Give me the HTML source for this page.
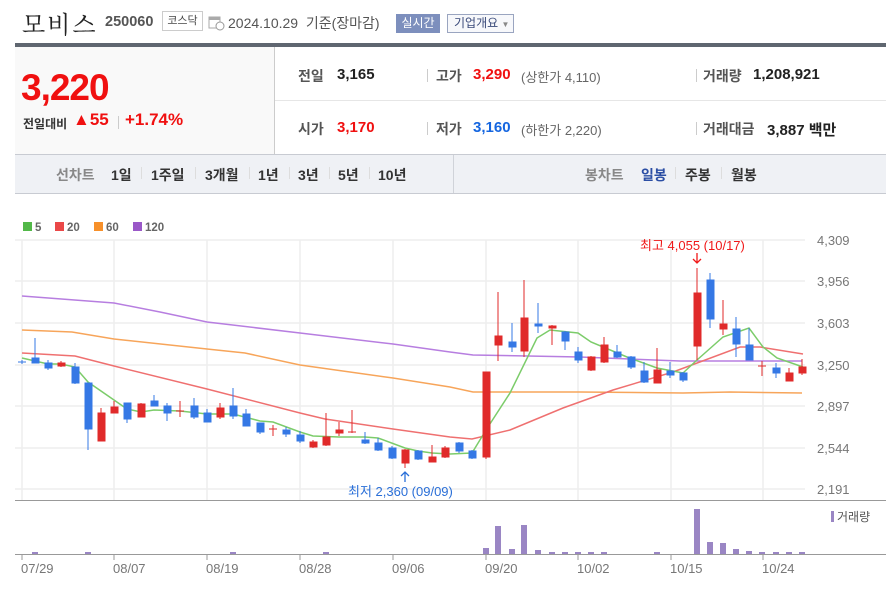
<!DOCTYPE html>
<html><head><meta charset="utf-8"><style>
*{margin:0;padding:0;box-sizing:border-box}
body{width:886px;height:597px;background:#fff;position:relative;overflow:hidden;font-family:"Liberation Sans","Noto Sans CJK KR",sans-serif;color:#333}
.a{position:absolute;white-space:nowrap}
.b{font-weight:bold}
.r{color:#f01010}.bl{color:#1566e0}
.sep{position:absolute;width:1px;height:13px;background:#ccc}
.tab{position:absolute;top:165px;font-size:14px;font-weight:bold;color:#333}
.ts{position:absolute;top:167px;width:1px;height:12px;background:#ddd}
</style></head><body>
<div class="a" style="left:22px;top:5px;font-size:24px;font-family:'Noto Serif CJK SC',serif;color:#222;letter-spacing:2px">모비스</div>
<div class="a b" style="left:105px;top:14px;font-size:14.5px;color:#555">250060</div>
<div class="a" style="left:162px;top:11px;width:41px;height:20px;border:1px solid #ccc;font-size:11px;line-height:18px;text-align:center;color:#444">코스닥</div>
<svg class="a" style="left:208px;top:14px" width="17" height="17"><rect x="1" y="3" width="11" height="11" fill="none" stroke="#aaa"/><rect x="1" y="3" width="11" height="3" fill="#aaa"/><circle cx="12" cy="12" r="4" fill="#fff" stroke="#999"/></svg>
<div class="a" style="left:228px;top:13px;font-size:14px;color:#555">2024.10.29 &nbsp;기준(장마감)</div>
<div class="a" style="left:396px;top:14px;width:44px;height:19px;background:#7d8fbd;color:#fff;font-size:12px;line-height:19px;text-align:center">실시간</div>
<div class="a" style="left:447px;top:14px;width:67px;height:19px;border:1px solid #9aa5c0;color:#3a4a7a;font-size:12px;line-height:17px;padding-left:6px;background:#f7f8fb">기업개요 <span style="font-size:8px;color:#888">▼</span></div>
<div class="a" style="left:15px;top:43px;width:871px;height:4px;background:#5f6670"></div>
<div class="a" style="left:15px;top:47px;width:260px;height:107px;background:#f9f9f9;border-right:1px solid #ccc"></div>
<div class="a b r" style="left:21px;top:67px;font-size:37px;letter-spacing:-1px">3,220</div>
<div class="a" style="left:23px;top:115px;font-size:12px;color:#333;font-weight:bold">전일대비</div>
<div class="a b r" style="left:73px;top:110px;font-size:17px">▲55</div>
<div class="sep" style="left:118px;top:116px"></div>
<div class="a b r" style="left:125px;top:110px;font-size:17px">+1.74%</div>
<div class="a" style="left:275px;top:100px;width:611px;height:1px;background:#e6e6e6"></div>
<div class="a b" style="left:298px;top:66px;font-size:14px;color:#555">전일</div><div class="a b" style="left:337px;top:66px;font-size:15px;color:#222">3,165</div>
<div class="sep" style="left:427px;top:69px"></div>
<div class="a b" style="left:436px;top:66px;font-size:14px;color:#555">고가</div><div class="a b r" style="left:473px;top:66px;font-size:15px">3,290</div><div class="a" style="left:521px;top:67px;font-size:13px;color:#666">(상한가 4,110)</div>
<div class="sep" style="left:696px;top:69px"></div>
<div class="a b" style="left:703px;top:66px;font-size:14px;color:#555">거래량</div><div class="a b" style="left:753px;top:66px;font-size:15px;color:#222">1,208,921</div>
<div class="a b" style="left:298px;top:119px;font-size:14px;color:#555">시가</div><div class="a b r" style="left:337px;top:119px;font-size:15px">3,170</div>
<div class="sep" style="left:427px;top:122px"></div>
<div class="a b" style="left:436px;top:119px;font-size:14px;color:#555">저가</div><div class="a b bl" style="left:473px;top:119px;font-size:15px">3,160</div><div class="a" style="left:521px;top:120px;font-size:13px;color:#666">(하한가 2,220)</div>
<div class="sep" style="left:696px;top:122px"></div>
<div class="a b" style="left:703px;top:119px;font-size:14px;color:#555">거래대금</div><div class="a b" style="left:767px;top:119px;font-size:15px;color:#222">3,887 백만</div>
<div class="a" style="left:15px;top:154px;width:871px;height:40px;background:#eff1f5;border-top:1px solid #c8cbd2;border-bottom:1px solid #c8cbd2"></div>
<div class="a" style="left:453px;top:155px;width:1px;height:38px;background:#d0d3d9"></div>
<div class="tab" style="left:56px;color:#888">선차트</div>
<div class="tab" style="left:111px">1일</div><div class="ts" style="left:141px"></div>
<div class="tab" style="left:151px">1주일</div><div class="ts" style="left:195px"></div>
<div class="tab" style="left:205px">3개월</div><div class="ts" style="left:249px"></div>
<div class="tab" style="left:258px">1년</div><div class="ts" style="left:289px"></div>
<div class="tab" style="left:298px">3년</div><div class="ts" style="left:329px"></div>
<div class="tab" style="left:338px">5년</div><div class="ts" style="left:369px"></div>
<div class="tab" style="left:378px">10년</div>
<div class="tab" style="left:585px;color:#888">봉차트</div>
<div class="tab" style="left:641px;color:#2b4ea4">일봉</div><div class="ts" style="left:675px"></div>
<div class="tab" style="left:685px">주봉</div><div class="ts" style="left:721px"></div>
<div class="tab" style="left:731px">월봉</div>

<svg class="a" style="left:0;top:0" width="886" height="597" font-family="Liberation Sans,Noto Sans CJK KR,sans-serif">
<g font-size="11.5" font-weight="bold" fill="#666">
<rect x="23" y="222" width="9" height="9" fill="#52b848"/><text x="35" y="231">5</text>
<rect x="55" y="222" width="9" height="9" fill="#ea4848"/><text x="67" y="231">20</text>
<rect x="94" y="222" width="9" height="9" fill="#f7902a"/><text x="106" y="231">60</text>
<rect x="133" y="222" width="9" height="9" fill="#9a58c8"/><text x="145" y="231">120</text>
</g>
<g stroke="#eeeeee" stroke-width="1.5">
<path d="M15 240H805M15 281H805M15 323H805M15 365H805M15 406H805M15 448H805M15 489H805"/>
<path d="M22 240V500M114 240V500M207 240V500M300 240V500M393 240V500M486 240V500M578 240V500M671 240V500M763 240V500"/>
</g>
<path d="M15 500.5H886M15 554.5H886" stroke="#999" stroke-width="1"/>
<path d="M22 554V560M114 554V560M207 554V560M300 554V560M393 554V560M486 554V560M578 554V560M671 554V560M763 554V560" stroke="#999"/>
<g font-size="13" fill="#777">
<text x="817" y="245">4,309</text><text x="817" y="286">3,956</text><text x="817" y="328">3,603</text><text x="817" y="370">3,250</text><text x="817" y="411">2,897</text><text x="817" y="453">2,544</text><text x="817" y="494">2,191</text>
<text x="21" y="573">07/29</text><text x="113" y="573">08/07</text><text x="206" y="573">08/19</text><text x="299" y="573">08/28</text><text x="392" y="573">09/06</text><text x="485" y="573">09/20</text><text x="577" y="573">10/02</text><text x="670" y="573">10/15</text><text x="762" y="573">10/24</text>
</g>
<g fill="none" stroke-width="1.5">
<polyline stroke="#b77ee0" points="22,296 114,303 160,312 207,322 300,333 393,344 450,352 473,355 580,357 680,361 802,361"/>
<polyline stroke="#f7a55a" points="22,330 72,332 114,339 207,349 245,353 300,365 393,378 450,387 473,392 580,392 683,393 730,392 802,393"/>
<polyline stroke="#ef7070" points="22,353 75,356 114,366 207,389 300,413 325,419 393,429 450,437 472,439 510,430 563,408 613,390 673,372 740,347 760,347 803,354"/>
<polyline stroke="#7ccc6a" points="22,358 48,364 61,364 75,367 88,382 114,400 127,409 141,412 154,410 180,411 207,414 233,414 260,421 273,422 300,432 313,436 339,437 365,437 378,438 405,448 418,451 432,453 450,454 472,453 486,430 510,393 537,338 550,330 578,333 591,342 627,357 657,368 683,373 697,360 723,337 749,328 763,347 777,358 803,367"/>
</g>
<g stroke="#3578e5" fill="#3578e5">
<path d="M22 360V364M18 362H26M35 338V363M48 360V370M75 363V384M88 383V450M127 403V423M154 395V406M167 403V421M194 398V419M207 409V422M233 388V419M246 409V426M260 423V434M286 427V437M300 431V443M365 432V444M378 438V451M392 446V459M418 450V460M459 442V453M472 450V459M512 323V352M538 303V333M565 331V350M578 347V363M617 345V358M631 356V369M644 362V383M670 362V378M683 372V382M710 273V328M736 317V357M749 328V360M776 363V378"/>
<rect x="32" y="358" width="7" height="5"/><rect x="45" y="363" width="7" height="5"/><rect x="72" y="367" width="7" height="16"/><rect x="85" y="383" width="7" height="46"/><rect x="124" y="403" width="7" height="16"/><rect x="151" y="401" width="7" height="5"/><rect x="164" y="406" width="7" height="7"/><rect x="191" y="406" width="7" height="11"/><rect x="204" y="413" width="7" height="9"/><rect x="230" y="406" width="7" height="10"/><rect x="243" y="414" width="7" height="12"/><rect x="257" y="423" width="7" height="9"/><rect x="283" y="430" width="7" height="4"/><rect x="297" y="435" width="7" height="6"/><rect x="362" y="440" width="7" height="3"/><rect x="375" y="443" width="7" height="7"/><rect x="389" y="448" width="7" height="10"/><rect x="415" y="451" width="7" height="8"/><rect x="456" y="443" width="7" height="8"/><rect x="469" y="451" width="7" height="7"/><rect x="509" y="342" width="7" height="5"/><rect x="535" y="324" width="7" height="2"/><rect x="562" y="332" width="7" height="9"/><rect x="575" y="352" width="7" height="8"/><rect x="614" y="352" width="7" height="5"/><rect x="628" y="357" width="7" height="10"/><rect x="641" y="371" width="7" height="11"/><rect x="667" y="371" width="7" height="4"/><rect x="680" y="373" width="7" height="7"/><rect x="707" y="280" width="7" height="39"/><rect x="733" y="329" width="7" height="15"/><rect x="746" y="345" width="7" height="15"/><rect x="773" y="368" width="7" height="5"/>
</g>
<g stroke="#e02a2a" fill="#e02a2a">
<path d="M61 361V367M101 408V441M114 401V413M141 403V417M180 401V417M176 411H184M220 403V419M273 425V436M269 429H277M313 440V448M326 413V446M339 422V436M352 410V433M348 432H356M405 449V468M432 445V462M445 446V458M486 372V459M498 292V361M524 280V357M552 325V345M591 356V371M604 337V363M657 348V383M697 268V360M723 300V335M762 361V376M758 366H766M789 368V381M802 359V375"/>
<rect x="58" y="363" width="7" height="3"/><rect x="98" y="413" width="7" height="28"/><rect x="111" y="407" width="7" height="6"/><rect x="138" y="404" width="7" height="13"/><rect x="217" y="408" width="7" height="9"/><rect x="310" y="442" width="7" height="5"/><rect x="323" y="437" width="7" height="8"/><rect x="336" y="430" width="7" height="3"/><rect x="402" y="450" width="7" height="13"/><rect x="429" y="457" width="7" height="5"/><rect x="442" y="448" width="7" height="9"/><rect x="483" y="372" width="7" height="85"/><rect x="495" y="336" width="7" height="9"/><rect x="521" y="318" width="7" height="33"/><rect x="549" y="326" width="7" height="2"/><rect x="588" y="357" width="7" height="13"/><rect x="601" y="345" width="7" height="17"/><rect x="654" y="370" width="7" height="13"/><rect x="694" y="293" width="7" height="53"/><rect x="720" y="324" width="7" height="5"/><rect x="786" y="373" width="7" height="8"/><rect x="799" y="367" width="7" height="6"/>
</g>
<g fill="#9a86c4">
<rect x="32" y="552" width="6" height="2"/><rect x="85" y="552" width="6" height="2"/><rect x="230" y="552" width="6" height="2"/><rect x="323" y="552" width="6" height="2"/>
<rect x="483" y="548" width="6" height="6"/><rect x="495" y="526" width="6" height="28"/><rect x="509" y="549" width="6" height="5"/><rect x="521" y="525" width="6" height="29"/><rect x="535" y="550" width="6" height="4"/><rect x="549" y="552" width="6" height="2"/><rect x="562" y="552" width="6" height="2"/><rect x="575" y="552" width="6" height="2"/><rect x="588" y="552" width="6" height="2"/><rect x="601" y="552" width="6" height="2"/><rect x="654" y="552" width="6" height="2"/><rect x="694" y="509" width="6" height="45"/><rect x="707" y="542" width="6" height="12"/><rect x="720" y="543" width="6" height="11"/><rect x="733" y="549" width="6" height="5"/><rect x="746" y="551" width="6" height="3"/><rect x="759" y="552" width="6" height="2"/><rect x="773" y="552" width="6" height="2"/><rect x="786" y="552" width="6" height="2"/><rect x="799" y="552" width="6" height="2"/>
<rect x="831" y="511" width="3" height="11"/>
</g>
<text x="837" y="521" font-size="12" fill="#555">거래량</text>
<text x="640" y="250" font-size="13" fill="#f01818">최고 4,055 (10/17)</text>
<path d="M697 253V263M693 259L697 263L701 259" stroke="#f01818" fill="none" stroke-width="1.3"/>
<text x="348" y="496" font-size="13" fill="#2a6fd8">최저 2,360 (09/09)</text>
<path d="M405 472V482M401 476L405 472L409 476" stroke="#2a6fd8" fill="none" stroke-width="1.3"/>
</svg>
</body></html>
